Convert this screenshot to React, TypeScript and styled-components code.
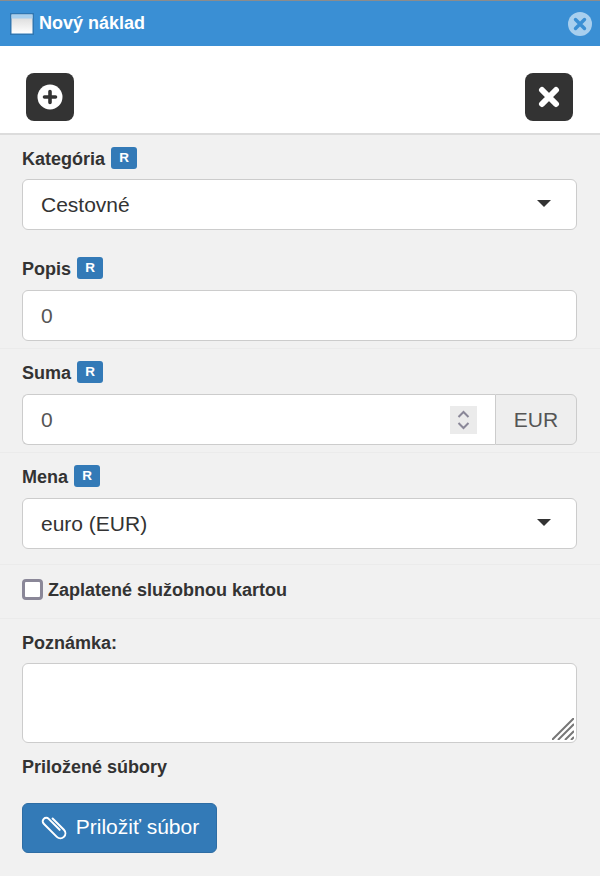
import React from "react";
import styled, { createGlobalStyle } from "styled-components";

const Global = createGlobalStyle`
  html, body { margin: 0; padding: 0; background: #f1f1f1; }
  * { box-sizing: border-box; }
  body { font-family: "Liberation Sans", Arial, sans-serif; color: #333; }
`;

const Page = styled.div`
  width: 600px;
  height: 876px;
  overflow: hidden;
  background: #f1f1f1;
  display: flex;
  flex-direction: column;
`;
const Header = styled.header`
  height: 46px;
  flex: none;
  background: #3a8fd4;
  border-top: 1px solid #8c8c8c;
  display: flex;
  align-items: center;
  padding: 0 8px 0 10px;
  color: #fff;
`;
const Title = styled.h1`
  margin: 0 0 1px 4px;
  font-size: 18px;
  line-height: 22px;
  font-weight: 700;
  flex: 1;
`;
const Toolbar = styled.div`
  height: 89px;
  flex: none;
  background: #fff;
  border-bottom: 2px solid #dcdcdc;
  display: flex;
  justify-content: space-between;
  align-items: flex-start;
  padding: 27px 27px 0 26px;
`;
const ToolButton = styled.button`
  width: 48px;
  height: 48px;
  padding: 0;
  border: 0;
  border-radius: 8px;
  background: #333;
  display: flex;
  align-items: center;
  justify-content: center;
`;
const Section = styled.section<{ $h: number; $line?: boolean }>`
  height: ${(p) => p.$h}px;
  flex: none;
  padding: 0 23px 0 22px;
  border-bottom: ${(p) => (p.$line ? "1px solid #ebebeb" : "0")};
`;
const LabelRow = styled.div<{ $top: number; $bottom: number }>`
  display: flex;
  align-items: center;
  gap: 6px;
  height: 22px;
  margin-top: ${(p) => p.$top}px;
  margin-bottom: ${(p) => p.$bottom}px;
`;
const Label = styled.label`
  font-size: 18px;
  font-weight: 700;
  color: #333;
`;
const Badge = styled.span`
  width: 26px;
  height: 22px;
  margin-top: -2px;
  border-radius: 3px;
  background: #337ab7;
  color: #fff;
  font-size: 13.5px;
  font-weight: 700;
  display: flex;
  align-items: center;
  justify-content: center;
  padding-bottom: 2px;
`;
const Field = styled.div`
  height: 51px;
  background: #fff;
  border: 1px solid #ccc;
  border-radius: 6px;
  display: flex;
  align-items: center;
  padding: 0 25px 0 18px;
  font-size: 21px;
  color: #333;
`;
const FieldValue = styled.span<{ $muted?: boolean }>`
  flex: 1;
  color: ${(p) => (p.$muted ? "#555" : "#333")};
`;
const Caret = styled.span`
  width: 0;
  height: 0;
  border-left: 7.5px solid transparent;
  border-right: 7.5px solid transparent;
  border-top: 7.5px solid #333;
  margin-top: -3px;
`;
const Group = styled.div`
  display: flex;
  height: 51px;
`;
const GroupInput = styled(Field)`
  flex: 1;
  border-radius: 6px 0 0 6px;
  border-right: 0;
  padding: 0 18px 0 18px;
`;
const Addon = styled.div`
  width: 82px;
  border: 1px solid #ccc;
  border-radius: 0 6px 6px 0;
  background: #eee;
  color: #555;
  font-size: 21px;
  display: flex;
  align-items: center;
  justify-content: center;
`;
const Spinner = styled.span`
  width: 27px;
  height: 28px;
  background: #ebebeb;
  display: flex;
  align-items: center;
  justify-content: center;
`;
const CheckRow = styled.div`
  display: flex;
  align-items: center;
  gap: 5px;
  height: 53px;
  padding-bottom: 4px;
`;
const CheckBox = styled.span`
  width: 21px;
  height: 21px;
  background: #fff;
  border: 3px solid #8a8798;
  border-radius: 4px;
`;
const CheckLabel = styled(Label)`
  padding-top: 2px;
`;
const Notes = styled.div`
  position: relative;
  height: 80px;
  background: #fff;
  border: 1px solid #ccc;
  border-radius: 6px;
`;
const Grip = styled.svg`
  position: absolute;
  right: 2px;
  bottom: 2px;
`;
const AttachButton = styled.button`
  width: 195px;
  height: 50px;
  margin-top: 25px;
  display: flex;
  align-items: center;
  justify-content: center;
  gap: 8px;
  background: #337ab7;
  border: 1px solid #2e6da4;
  border-radius: 6px;
  color: #fff;
  font-family: inherit;
  font-size: 21px;
  padding: 0 0 2px;
`;

const R = () => <Badge>R</Badge>;

export default function App() {
  return (
    <Page>
      <Global />
      <Header>
        <svg width="25" height="22" viewBox="0 0 25 22">
          <defs>
            <linearGradient id="win" x1="0" y1="0" x2="0" y2="1">
              <stop offset="0" stopColor="#d6d6d6" />
              <stop offset="1" stopColor="#ffffff" />
            </linearGradient>
          </defs>
          <rect x="0" y="0" width="24" height="22" fill="#2f77b3" />
          <rect x="1.500" y="1.500" width="21" height="19" fill="url(#win)" />
          <rect x="1.500" y="1.500" width="21" height="4" fill="#a9d0ee" />
        </svg>
        <Title>Nový náklad</Title>
        <svg width="24" height="24" viewBox="0 0 24 24">
          <circle cx="12" cy="12" r="12" fill="#a8cfee" />
          <path d="M7.500 7.500l9 9M16.500 7.500l-9 9" stroke="#3a8fd4" strokeWidth="3.400" strokeLinecap="round" />
        </svg>
      </Header>
      <Toolbar>
        <ToolButton aria-label="Pridať">
          <svg width="26" height="26" viewBox="0 0 26 26">
            <circle cx="13" cy="13" r="12.500" fill="#fff" />
            <path d="M13 7.500v11M7.500 13h11" stroke="#333" strokeWidth="3.600" strokeLinecap="round" />
          </svg>
        </ToolButton>
        <ToolButton aria-label="Zavrieť">
          <svg width="22" height="22" viewBox="0 0 22 22">
            <path d="M4 4l14 14M18 4L4 18" stroke="#fff" strokeWidth="6" strokeLinecap="round" />
          </svg>
        </ToolButton>
      </Toolbar>
      <Section $h={214} $line>
        <LabelRow $top={13} $bottom={9}>
          <Label>Kategória</Label>
          <R />
        </LabelRow>
        <Field>
          <FieldValue>Cestovné</FieldValue>
          <Caret />
        </Field>
        <LabelRow $top={28} $bottom={10}>
          <Label>Popis</Label>
          <R />
        </LabelRow>
        <Field>
          <FieldValue $muted>0</FieldValue>
        </Field>
      </Section>
      <Section $h={104} $line>
        <LabelRow $top={13} $bottom={10}>
          <Label>Suma</Label>
          <R />
        </LabelRow>
        <Group>
          <GroupInput>
            <FieldValue $muted>0</FieldValue>
            <Spinner>
              <svg width="15" height="22" viewBox="0 0 15 22">
                <path d="M2.500 8L7.500 3l5 5M2.500 14l5 5 5-5" fill="none" stroke="#8a8798" strokeWidth="2" />
              </svg>
            </Spinner>
          </GroupInput>
          <Addon>EUR</Addon>
        </Group>
      </Section>
      <Section $h={112} $line>
        <LabelRow $top={13} $bottom={10}>
          <Label>Mena</Label>
          <R />
        </LabelRow>
        <Field>
          <FieldValue>euro (EUR)</FieldValue>
          <Caret />
        </Field>
      </Section>
      <Section $h={54} $line>
        <CheckRow>
          <CheckBox />
          <CheckLabel>Zaplatené služobnou kartou</CheckLabel>
        </CheckRow>
      </Section>
      <Section $h={257}>
        <LabelRow $top={13} $bottom={9}>
          <Label>Poznámka:</Label>
        </LabelRow>
        <Notes>
          <Grip width="22" height="22" viewBox="0 0 22 22">
            <path d="M0 22L22 0M6 22L22 6M13 22l9-9M19 22l3-3" stroke="#777" strokeWidth="2" />
          </Grip>
        </Notes>
        <LabelRow $top={13} $bottom={0}>
          <Label>Priložené súbory</Label>
        </LabelRow>
        <AttachButton>
          <svg width="28" height="28" viewBox="0 0 28 28">
            <path
              d="M18 8V24a5 5 0 0 1-10 0V5.500a3.500 3.500 0 0 1 7 0V21"
              fill="none"
              stroke="#fff"
              strokeWidth="2"
              strokeLinecap="round"
              transform="rotate(-45 14 14) translate(1 -1)"
            />
          </svg>
          Priložiť súbor
        </AttachButton>
      </Section>
    </Page>
  );
}
